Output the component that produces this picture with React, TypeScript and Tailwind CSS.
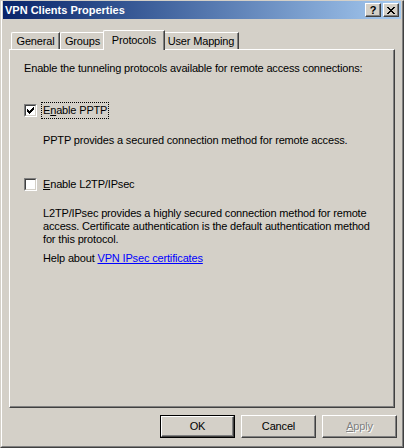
import React from "react";

function Check() {
  return (
    <svg width="7" height="7" viewBox="0 0 7 7" shapeRendering="crispEdges">
      <path d="M0 2h1v3H0zM1 3h1v3H1zM2 4h1v3H2zM3 3h1v3H3zM4 2h1v3H4zM5 1h1v3H5zM6 0h1v3H6z" fill="#000" />
    </svg>
  );
}

function CheckBox({ checked }: { checked: boolean }) {
  return (
    <div className="w-[13px] h-[13px] shrink-0 border-t border-l border-t-[#808080] border-l-[#808080] border-r border-b border-r-white border-b-white">
      <div className="w-full h-full bg-white border-t border-l border-t-[#404040] border-l-[#404040] border-r border-b border-r-[#d4d0c8] border-b-[#d4d0c8] flex items-center justify-center">
        {checked && <Check />}
      </div>
    </div>
  );
}

function Btn({ children, isDefault, disabled }: { children: React.ReactNode; isDefault?: boolean; disabled?: boolean }) {
  const inner = (
    <div className="w-full h-full border-t border-l border-t-white border-l-white border-r border-b border-r-[#404040] border-b-[#404040] shadow-[inset_-1px_-1px_0_#808080] flex items-center justify-center">
      <span className={disabled ? "text-[#808080] [text-shadow:1px_1px_0_#ffffff]" : "text-black"}>{children}</span>
    </div>
  );
  if (isDefault) {
    return <div className="w-[75px] h-[23px] border border-black">{inner}</div>;
  }
  return <div className="w-[75px] h-[23px]">{inner}</div>;
}

function TitleBtn({ children }: { children: React.ReactNode }) {
  return (
    <div className="w-[16px] h-[14px] bg-[#d4d0c8] border-t border-l border-t-white border-l-white border-r border-b border-r-[#404040] border-b-[#404040] shadow-[inset_-1px_-1px_0_#808080] flex items-center justify-center">
      {children}
    </div>
  );
}

export default function App() {
  return (
    <div className="w-[404px] h-[448px] bg-[#d4d0c8] [font-family:'Liberation_Sans',Tahoma,sans-serif] text-[11px] leading-[13px] tracking-[-0.16px] text-black select-none overflow-hidden">
      <div className="w-full h-full border-r border-b border-r-[#404040] border-b-[#404040] border-t border-l border-t-[#d4d0c8] border-l-[#d4d0c8]">
        <div className="w-full h-full border-r border-b border-r-[#808080] border-b-[#808080] border-l border-l-white pl-[1px] pr-[1px] flex flex-col">
          {/* Title bar */}
          <div className="h-[18px] bg-gradient-to-r from-[#0a246a] to-[#a6caf0] flex items-center pl-[2px] pr-[2px]">
            <span className="text-white font-bold text-[11px] tracking-normal flex-1">VPN Clients Properties</span>
            <div className="flex gap-[2px]">
              <TitleBtn>
                <span className="font-bold text-[11px] leading-none text-black mt-[1px]">?</span>
              </TitleBtn>
              <TitleBtn>
                <svg width="8" height="7" viewBox="0 0 8 7" shapeRendering="crispEdges">
                  <path d="M0 0h2v1H0zM6 0h2v1H6zM1 1h2v1H1zM5 1h2v1H5zM2 2h4v1H2zM3 3h2v1H3zM2 4h4v1H2zM1 5h2v1H1zM5 5h2v1H5zM0 6h2v1H0zM6 6h2v1H6z" fill="#000" />
                </svg>
              </TitleBtn>
            </div>
          </div>

          {/* Tabs */}
          <div className="mt-[11px] pl-[8px] flex items-end h-[20px] -mb-px relative z-10">
            <div className="w-[49px] h-[17px] mb-px border-t border-l border-t-white border-l-white border-r border-r-[#404040] shadow-[inset_-1px_0_0_#808080] rounded-tl-[2px] flex items-center justify-center">
              General
            </div>
            <div className="w-[45px] h-[17px] mb-px border-t border-l border-t-white border-l-white border-r border-r-[#404040] shadow-[inset_-1px_0_0_#808080] rounded-tl-[2px] flex items-center justify-center">
              Groups
            </div>
            <div className="w-[62px] h-[20px] -ml-[2px] -mr-[2px] bg-[#d4d0c8] relative z-20 border-t border-l border-t-white border-l-white border-r border-r-[#404040] shadow-[inset_-1px_0_0_#808080] rounded-tl-[2px] flex items-start justify-center pt-[3px]">
              Protocols
            </div>
            <div className="w-[76px] h-[17px] mb-px border-t border-l border-t-white border-l-white border-r border-r-[#404040] shadow-[inset_-1px_0_0_#808080] rounded-tl-[2px] flex items-center justify-center">
              User Mapping
            </div>
          </div>

          {/* Panel */}
          <div className="ml-[6px] w-[386px] h-[359px] border-t border-l border-t-white border-l-white border-r border-b border-r-[#404040] border-b-[#404040] shadow-[inset_-1px_-1px_0_#808080] pt-[12px] pl-[14px]">
            <div>Enable the tunneling protocols available for remote access connections:</div>

            <div className="mt-[27px] h-[17px] flex items-center">
              <CheckBox checked />
              <div className="ml-[4px] h-[17px] px-[1px] border border-dotted border-black flex items-center">
                <span>
                  E<span className="underline">n</span>able PPTP
                </span>
              </div>
            </div>

            <div className="mt-[15px] ml-[19px]">PPTP provides a secured connection method for remote access.</div>

            <div className="mt-[29px] h-[17px] flex items-center">
              <CheckBox checked={false} />
              <div className="ml-[5px] px-[1px]">
                <span className="underline">E</span>nable L2TP/IPsec
              </div>
            </div>

            <div className="mt-[14px] ml-[19px] w-[338px]">
              L2TP/IPsec provides a highly secured connection method for remote access. Certificate authentication is the default authentication method for this protocol.
            </div>

            <div className="mt-[6px] ml-[19px]">
              Help about <span className="text-[#0000ff] underline">VPN IPsec certificates</span>
            </div>
          </div>

          {/* Buttons */}
          <div className="mt-[7px] flex justify-end gap-[6px] pr-[4px]">
            <Btn isDefault>OK</Btn>
            <Btn>Cancel</Btn>
            <Btn disabled>
              <span className="underline">A</span>pply
            </Btn>
          </div>
        </div>
      </div>
    </div>
  );
}
